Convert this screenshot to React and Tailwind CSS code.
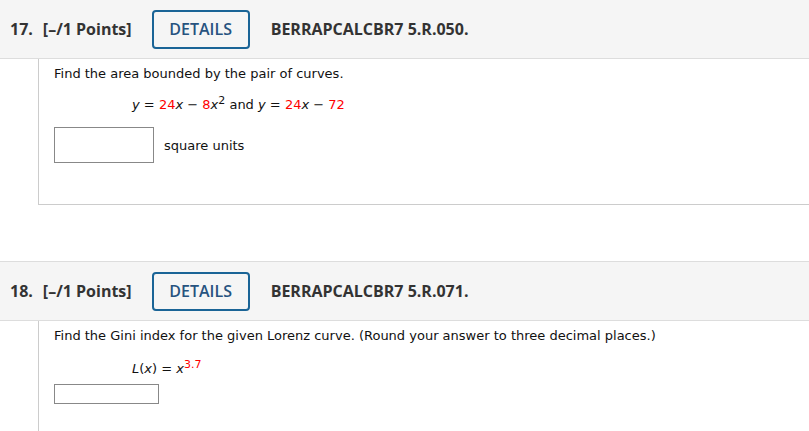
import React from 'react';

const Header = ({ num, code, top }) => (
  <div
    className={`h-[59px] bg-[#f5f5f5] border-b border-[#dddddd] flex items-center pl-[10px] font-['Open_Sans',sans-serif] font-bold text-[16px] text-[#333333] ${top ? 'border-t h-[60px]' : ''}`}
  >
    <span>{num}.</span>
    <span className="ml-[10px]">[–/1 Points]</span>
    <button className="ml-[20px] w-[98px] h-[39px] border-2 border-[#1a6496] rounded-[4px] text-[#27537f] font-semibold text-[16px] flex items-center justify-center">
      DETAILS
    </button>
    <span className="ml-[21px]">{code}</span>
  </div>
);

const Red = ({ children }) => <span className="text-[#ff0000]">{children}</span>;

export default function App() {
  return (
    <div className="w-[809px] h-[431px] overflow-hidden bg-white font-['DejaVu_Sans',Verdana,sans-serif] text-[13px] text-[#111111]">
      <Header num="17" code="BERRAPCALCBR7 5.R.050." />
      <div className="ml-[38px] h-[146px] border-l border-b border-[#cccccc] pl-[15px] pt-[7px]">
        <p className="leading-[16px]">Find the area bounded by the pair of curves.</p>
        <p className="mt-[15px] ml-[78px] leading-[16px] whitespace-pre">
          <i>y</i>{' = '}<Red>24</Red><i>x</i>{' − '}<Red>8</Red><i>x</i>
          <sup className="text-[11px]">2</sup>{' and '}<i>y</i>{' = '}<Red>24</Red><i>x</i>{' − '}<Red>72</Red>
        </p>
        <div className="mt-[14px] flex items-center">
          <input className="w-[100px] h-[36px] border border-[#888888] bg-white" />
          <span className="ml-[10px] mt-[2px]">square units</span>
        </div>
      </div>
      <div className="h-[56px]" />
      <Header num="18" code="BERRAPCALCBR7 5.R.071." top />
      <div className="ml-[38px] h-[120px] border-l border-[#cccccc] pl-[15px] pt-[7px]">
        <p className="leading-[16px]">
          Find the Gini index for the given Lorenz curve. (Round your answer to three decimal places.)
        </p>
        <p className="mt-[17px] ml-[78px] leading-[16px]">
          <i>L</i>(<i>x</i>) = <i>x</i>
          <sup className="text-[11px] text-[#ff0000]">3.7</sup>
        </p>
        <input className="mt-[7px] block w-[105px] h-[20px] border border-[#888888] bg-white" />
      </div>
    </div>
  );
}
